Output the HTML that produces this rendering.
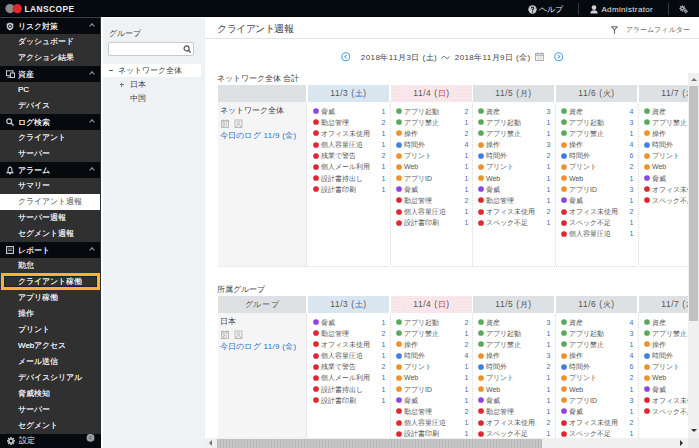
<!DOCTYPE html>
<html lang="ja"><head><meta charset="utf-8">
<style>
*{margin:0;padding:0;box-sizing:border-box}
html,body{width:699px;height:448px;overflow:hidden;background:#fff;font-family:"Liberation Sans",sans-serif;}
.abs{position:absolute}
#top{position:absolute;left:0;top:0;width:699px;height:17px;background:#050a0f;border-bottom:1px solid #010203}
#side{position:absolute;left:0;top:17px;width:101px;height:431px;background:#303031}
#side .line{position:absolute;left:0;top:0;width:100px;height:1px;background:#3d4147}
.sh,.sit,.sa,.so{position:absolute;left:0;width:100px;height:16px;font-size:8px;line-height:16px;white-space:nowrap}
.sh{background:#060a0f;color:#f0f0f0;text-shadow:0 0 0.4px #f0f0f0}
.sit{color:#ececec;text-shadow:0 0 0.4px #ececec}
.sa{background:#fff;color:#555;font-weight:normal}
.so{color:#ececec;text-shadow:0 0 0.4px #ececec}
.so:before{content:"";box-sizing:border-box;position:absolute;left:1px;top:-1px;width:99px;height:17px;border:3px solid #f8b332;box-shadow:inset 0 0 0 1px #1c2128}
.st{position:absolute;left:18px;top:0}
.sh .st{top:0.8px}
.si{position:absolute;left:6px;top:4px;line-height:0}
.chev{position:absolute;left:90px;top:6px;width:4px;height:4px;border-left:1px solid #9aa0a6;border-top:1px solid #9aa0a6;transform:rotate(45deg)}
#foot{position:absolute;left:0;top:434px;width:101px;height:14px;background:#060a0f;color:#e8e8e8;font-size:8px;line-height:14px}
#grp{position:absolute;left:101px;top:17px;width:104px;height:431px;background:#eef2f4;border-left:2px solid #fff;border-top:1px solid #fff}
#main{position:absolute;left:205px;top:17px;width:494px;height:431px;background:#fff}
.hc{position:absolute;height:17px;font-size:8.4px;line-height:17px;text-align:center;color:#555;letter-spacing:0.6px}
.hg{background:#dde1e4}
.hb{background:repeating-conic-gradient(#d3e2ee 0 25%,#dfebf3 0 50%) 0 0/2px 2px}
.hp{background:linear-gradient(#f9e7e9 2px,transparent 2px) 0 0/3px 3px,linear-gradient(90deg,#f9e7e9 2px,#ecdcee 2px) 0 0/3px 3px}
.sat{color:#2f6fc2} .sun{color:#d0303c}
.fc{position:absolute;background:#f5f5f5;padding:3px 0 0 1.5px}
.nm{font-size:7.5px;line-height:11px;color:#444}
.ic2{height:14px}
.bx{display:inline-block;width:7px;height:7px;border:1px solid #c2c2c2;margin:0 0 0 1px;margin-right:5px;vertical-align:top}
.lnk{font-size:8px;line-height:11px;color:#2a70c4;letter-spacing:0.3px}
.vl{position:absolute;width:1px;background:#e6e6e6}
.dl{position:absolute;width:1px;background:repeating-linear-gradient(#dcdcdc 0 1px,transparent 1px 2px)}
.bl{position:absolute;height:1px;background:repeating-linear-gradient(90deg,#d8d8d8 0 1px,transparent 1px 2px)}
.cc{position:absolute}
.r{position:relative;height:11.18px;font-size:7px;line-height:11.18px;color:#555;white-space:nowrap}
.r .d{position:absolute;left:4px;top:1.6px}
.r .t{position:absolute;left:13px;top:0}
.r .n{position:absolute;right:3.5px;top:0;color:#3c6fc0}
</style></head><body>
<div id="top"></div>
<div id="side"><div class="line"></div></div>
<div class="sh" style="top:18px"><span class="si"><svg width="8" height="9" viewBox="0 0 8 9"><path d="M4 0.5 L7.3 1.8 L7.3 4.6 Q7.3 7.2 4 8.6 Q0.7 7.2 0.7 4.6 L0.7 1.8 Z" fill="#c9cdd2"/><circle cx="4" cy="4.3" r="1.6" fill="none" stroke="#1a1d22" stroke-width="1"/></svg></span><span class="st">リスク対策</span><span class="chev"></span></div>
<div class="sit" style="top:34px"><span class="st">ダッシュボード</span></div>
<div class="sit" style="top:50px"><span class="st">アクション結果</span></div>
<div class="sh" style="top:66px"><span class="si"><svg width="9" height="8" viewBox="0 0 9 8"><rect x="0.5" y="0.8" width="6.5" height="4.8" fill="none" stroke="#c9cdd2" stroke-width="1"/><rect x="4.5" y="3" width="4" height="4.5" fill="#070b10" stroke="#c9cdd2" stroke-width="1"/><path d="M1.5 7.2 H4" stroke="#c9cdd2" stroke-width="1"/></svg></span><span class="st">資産</span><span class="chev"></span></div>
<div class="sit" style="top:82px"><span class="st">PC</span></div>
<div class="sit" style="top:98px"><span class="st">デバイス</span></div>
<div class="sh" style="top:114px"><span class="si"><svg width="8" height="8" viewBox="0 0 8 8"><circle cx="3.2" cy="3.2" r="2.4" fill="none" stroke="#c9cdd2" stroke-width="1.2"/><path d="M5 5 L7.5 7.5" stroke="#c9cdd2" stroke-width="1.4"/></svg></span><span class="st">ログ検索</span><span class="chev"></span></div>
<div class="sit" style="top:130px"><span class="st">クライアント</span></div>
<div class="sit" style="top:146px"><span class="st">サーバー</span></div>
<div class="sh" style="top:162px"><span class="si"><svg width="8" height="9" viewBox="0 0 8 9"><path d="M4 1.2 Q5.9 1.2 5.9 3.8 L5.9 5.5 L6.9 6.6 L1.1 6.6 L2.1 5.5 L2.1 3.8 Q2.1 1.2 4 1.2 Z" fill="none" stroke="#c9cdd2" stroke-width="1.1"/><path d="M3 7.6 H5" stroke="#c9cdd2" stroke-width="1.1"/><circle cx="4" cy="0.8" r="0.6" fill="#c9cdd2"/></svg></span><span class="st">アラーム</span><span class="chev"></span></div>
<div class="sit" style="top:178px"><span class="st">サマリー</span></div>
<div class="sa" style="top:194px"><span class="st">クライアント週報</span></div>
<div class="sit" style="top:210px"><span class="st">サーバー週報</span></div>
<div class="sit" style="top:226px"><span class="st">セグメント週報</span></div>
<div class="sh" style="top:242px"><span class="si"><svg width="8" height="8" viewBox="0 0 8 8"><rect x="0.6" y="0.6" width="6.8" height="6.8" fill="none" stroke="#c9cdd2" stroke-width="1.1"/><path d="M2 4.2 H6 M2.6 2.4 H3.4 M4.6 2.4 H5.4" stroke="#c9cdd2" stroke-width="1"/></svg></span><span class="st">レポート</span><span class="chev"></span></div>
<div class="sit" style="top:258px"><span class="st">勤怠</span></div>
<div class="so" style="top:274px"><span class="st">クライアント稼働</span></div>
<div class="sit" style="top:290px"><span class="st">アプリ稼働</span></div>
<div class="sit" style="top:306px"><span class="st">操作</span></div>
<div class="sit" style="top:322px"><span class="st">プリント</span></div>
<div class="sit" style="top:338px"><span class="st">Webアクセス</span></div>
<div class="sit" style="top:354px"><span class="st">メール送信</span></div>
<div class="sit" style="top:370px"><span class="st">デバイスシリアル</span></div>
<div class="sit" style="top:386px"><span class="st">脅威検知</span></div>
<div class="sit" style="top:402px"><span class="st">サーバー</span></div>
<div class="sit" style="top:418px"><span class="st">セグメント</span></div>
<div id="foot"><span style="position:absolute;left:18.5px">設定</span></div>
<div id="grp"></div>
<div id="main"></div>
<div class="abs" style="left:217px;top:22px;font-size:10px;line-height:13px;color:#444;transform:scale(0.955);transform-origin:0 50%">クライアント週報</div>
<div class="abs" style="left:205px;top:38px;width:494px;height:1px;background:#e3e3e3"></div>
<div class="abs" style="left:217px;top:73px;font-size:7.5px;line-height:11px;color:#444">ネットワーク全体 合計</div>
<div class="hc hg" style="left:218px;top:85px;width:88px"></div>
<div class="hc hb" style="left:308px;top:85px;width:81px">11/3 (<span class="sat">土</span>)</div>
<div class="hc hp" style="left:391px;top:85px;width:81px">11/4 (<span class="sun">日</span>)</div>
<div class="hc hg" style="left:473px;top:85px;width:81px">11/5 (月)</div>
<div class="hc hg" style="left:556px;top:85px;width:81px">11/6 (火)</div>
<div class="hc hg" style="left:639px;top:85px;width:81px">11/7 (水)</div>
<div class="fc" style="left:218px;top:102px;width:88px;height:164px"><div class="nm">ネットワーク全体</div><div class="ic2"><svg width="26" height="9" viewBox="0 0 26 9" style="position:absolute;left:3px;top:17px"><g fill="none" stroke="#b4b4b4" stroke-width="0.9"><rect x="0.5" y="1.5" width="7" height="7"/><path d="M2 0.3 V2.5 M6 0.3 V2.5 M0.5 3 H7.5"/><path d="M2 4.6 H3.6 V6 H2.2 V7.6 H3.6 M5.3 4.5 V7.6"/><rect x="14" y="1" width="7" height="7.5"/><circle cx="17.5" cy="3.6" r="1.3"/><path d="M15.2 8.3 Q15.5 5.6 17.5 5.6 Q19.5 5.6 19.8 8.3"/></g></svg></div><div class="lnk">今日のログ 11/9 (金)</div></div>
<div class="vl" style="left:306px;top:102px;height:164px"></div>
<div class="bl" style="left:218px;top:266px;width:480px"></div>
<div class="cc" style="left:308px;top:105.5px;width:81px"><div class="r"><svg class="d" width="8" height="8" viewBox="0 0 8 8"><circle cx="4" cy="4" r="2.85" fill="#8e44e0"/></svg><span class="t">脅威</span><span class="n">1</span></div><div class="r"><svg class="d" width="8" height="8" viewBox="0 0 8 8"><circle cx="4" cy="4" r="2.85" fill="#e0262f"/></svg><span class="t">勤怠管理</span><span class="n">2</span></div><div class="r"><svg class="d" width="8" height="8" viewBox="0 0 8 8"><circle cx="4" cy="4" r="2.85" fill="#e0262f"/></svg><span class="t">オフィス未使用</span><span class="n">1</span></div><div class="r"><svg class="d" width="8" height="8" viewBox="0 0 8 8"><circle cx="4" cy="4" r="2.85" fill="#e0262f"/></svg><span class="t">個人容量圧迫</span><span class="n">1</span></div><div class="r"><svg class="d" width="8" height="8" viewBox="0 0 8 8"><circle cx="4" cy="4" r="2.85" fill="#e0262f"/></svg><span class="t">残業で警告</span><span class="n">2</span></div><div class="r"><svg class="d" width="8" height="8" viewBox="0 0 8 8"><circle cx="4" cy="4" r="2.85" fill="#e0262f"/></svg><span class="t">個人メール利用</span><span class="n">1</span></div><div class="r"><svg class="d" width="8" height="8" viewBox="0 0 8 8"><circle cx="4" cy="4" r="2.85" fill="#e0262f"/></svg><span class="t">設計書持出し</span><span class="n">1</span></div><div class="r"><svg class="d" width="8" height="8" viewBox="0 0 8 8"><circle cx="4" cy="4" r="2.85" fill="#e0262f"/></svg><span class="t">設計書印刷</span><span class="n">1</span></div></div>
<div class="dl" style="left:390px;top:102px;height:164px"></div>
<div class="cc" style="left:391px;top:105.5px;width:81px"><div class="r"><svg class="d" width="8" height="8" viewBox="0 0 8 8"><circle cx="4" cy="4" r="2.85" fill="#5aaa5e"/></svg><span class="t">アプリ起動</span><span class="n">2</span></div><div class="r"><svg class="d" width="8" height="8" viewBox="0 0 8 8"><circle cx="4" cy="4" r="2.85" fill="#5aaa5e"/></svg><span class="t">アプリ禁止</span><span class="n">1</span></div><div class="r"><svg class="d" width="8" height="8" viewBox="0 0 8 8"><circle cx="4" cy="4" r="2.85" fill="#f0902a"/></svg><span class="t">操作</span><span class="n">2</span></div><div class="r"><svg class="d" width="8" height="8" viewBox="0 0 8 8"><circle cx="4" cy="4" r="2.85" fill="#3d7fe0"/></svg><span class="t">時間外</span><span class="n">4</span></div><div class="r"><svg class="d" width="8" height="8" viewBox="0 0 8 8"><circle cx="4" cy="4" r="2.85" fill="#f0902a"/></svg><span class="t">プリント</span><span class="n">1</span></div><div class="r"><svg class="d" width="8" height="8" viewBox="0 0 8 8"><circle cx="4" cy="4" r="2.85" fill="#f0902a"/></svg><span class="t">Web</span><span class="n">1</span></div><div class="r"><svg class="d" width="8" height="8" viewBox="0 0 8 8"><circle cx="4" cy="4" r="2.85" fill="#f0902a"/></svg><span class="t">アプリID</span><span class="n">1</span></div><div class="r"><svg class="d" width="8" height="8" viewBox="0 0 8 8"><circle cx="4" cy="4" r="2.85" fill="#8e44e0"/></svg><span class="t">脅威</span><span class="n">1</span></div><div class="r"><svg class="d" width="8" height="8" viewBox="0 0 8 8"><circle cx="4" cy="4" r="2.85" fill="#e0262f"/></svg><span class="t">勤怠管理</span><span class="n">2</span></div><div class="r"><svg class="d" width="8" height="8" viewBox="0 0 8 8"><circle cx="4" cy="4" r="2.85" fill="#e0262f"/></svg><span class="t">個人容量圧迫</span><span class="n">1</span></div><div class="r"><svg class="d" width="8" height="8" viewBox="0 0 8 8"><circle cx="4" cy="4" r="2.85" fill="#e0262f"/></svg><span class="t">設計書印刷</span><span class="n">1</span></div></div>
<div class="dl" style="left:472px;top:102px;height:164px"></div>
<div class="cc" style="left:473px;top:105.5px;width:81px"><div class="r"><svg class="d" width="8" height="8" viewBox="0 0 8 8"><circle cx="4" cy="4" r="2.85" fill="#5aaa5e"/></svg><span class="t">資産</span><span class="n">3</span></div><div class="r"><svg class="d" width="8" height="8" viewBox="0 0 8 8"><circle cx="4" cy="4" r="2.85" fill="#5aaa5e"/></svg><span class="t">アプリ起動</span><span class="n">1</span></div><div class="r"><svg class="d" width="8" height="8" viewBox="0 0 8 8"><circle cx="4" cy="4" r="2.85" fill="#5aaa5e"/></svg><span class="t">アプリ禁止</span><span class="n">1</span></div><div class="r"><svg class="d" width="8" height="8" viewBox="0 0 8 8"><circle cx="4" cy="4" r="2.85" fill="#f0902a"/></svg><span class="t">操作</span><span class="n">3</span></div><div class="r"><svg class="d" width="8" height="8" viewBox="0 0 8 8"><circle cx="4" cy="4" r="2.85" fill="#3d7fe0"/></svg><span class="t">時間外</span><span class="n">2</span></div><div class="r"><svg class="d" width="8" height="8" viewBox="0 0 8 8"><circle cx="4" cy="4" r="2.85" fill="#f0902a"/></svg><span class="t">プリント</span><span class="n">1</span></div><div class="r"><svg class="d" width="8" height="8" viewBox="0 0 8 8"><circle cx="4" cy="4" r="2.85" fill="#f0902a"/></svg><span class="t">Web</span><span class="n">1</span></div><div class="r"><svg class="d" width="8" height="8" viewBox="0 0 8 8"><circle cx="4" cy="4" r="2.85" fill="#8e44e0"/></svg><span class="t">脅威</span><span class="n">1</span></div><div class="r"><svg class="d" width="8" height="8" viewBox="0 0 8 8"><circle cx="4" cy="4" r="2.85" fill="#e0262f"/></svg><span class="t">勤怠管理</span><span class="n">1</span></div><div class="r"><svg class="d" width="8" height="8" viewBox="0 0 8 8"><circle cx="4" cy="4" r="2.85" fill="#e0262f"/></svg><span class="t">オフィス未使用</span><span class="n">2</span></div><div class="r"><svg class="d" width="8" height="8" viewBox="0 0 8 8"><circle cx="4" cy="4" r="2.85" fill="#e0262f"/></svg><span class="t">スペック不足</span><span class="n">1</span></div></div>
<div class="dl" style="left:555px;top:102px;height:164px"></div>
<div class="cc" style="left:556px;top:105.5px;width:81px"><div class="r"><svg class="d" width="8" height="8" viewBox="0 0 8 8"><circle cx="4" cy="4" r="2.85" fill="#5aaa5e"/></svg><span class="t">資産</span><span class="n">4</span></div><div class="r"><svg class="d" width="8" height="8" viewBox="0 0 8 8"><circle cx="4" cy="4" r="2.85" fill="#5aaa5e"/></svg><span class="t">アプリ起動</span><span class="n">3</span></div><div class="r"><svg class="d" width="8" height="8" viewBox="0 0 8 8"><circle cx="4" cy="4" r="2.85" fill="#5aaa5e"/></svg><span class="t">アプリ禁止</span><span class="n">1</span></div><div class="r"><svg class="d" width="8" height="8" viewBox="0 0 8 8"><circle cx="4" cy="4" r="2.85" fill="#f0902a"/></svg><span class="t">操作</span><span class="n">4</span></div><div class="r"><svg class="d" width="8" height="8" viewBox="0 0 8 8"><circle cx="4" cy="4" r="2.85" fill="#3d7fe0"/></svg><span class="t">時間外</span><span class="n">6</span></div><div class="r"><svg class="d" width="8" height="8" viewBox="0 0 8 8"><circle cx="4" cy="4" r="2.85" fill="#f0902a"/></svg><span class="t">プリント</span><span class="n">2</span></div><div class="r"><svg class="d" width="8" height="8" viewBox="0 0 8 8"><circle cx="4" cy="4" r="2.85" fill="#f0902a"/></svg><span class="t">Web</span><span class="n">1</span></div><div class="r"><svg class="d" width="8" height="8" viewBox="0 0 8 8"><circle cx="4" cy="4" r="2.85" fill="#f0902a"/></svg><span class="t">アプリID</span><span class="n">3</span></div><div class="r"><svg class="d" width="8" height="8" viewBox="0 0 8 8"><circle cx="4" cy="4" r="2.85" fill="#8e44e0"/></svg><span class="t">脅威</span><span class="n">1</span></div><div class="r"><svg class="d" width="8" height="8" viewBox="0 0 8 8"><circle cx="4" cy="4" r="2.85" fill="#e0262f"/></svg><span class="t">オフィス未使用</span><span class="n">2</span></div><div class="r"><svg class="d" width="8" height="8" viewBox="0 0 8 8"><circle cx="4" cy="4" r="2.85" fill="#e0262f"/></svg><span class="t">スペック不足</span><span class="n">1</span></div><div class="r"><svg class="d" width="8" height="8" viewBox="0 0 8 8"><circle cx="4" cy="4" r="2.85" fill="#e0262f"/></svg><span class="t">個人容量圧迫</span><span class="n">1</span></div></div>
<div class="dl" style="left:638px;top:102px;height:164px"></div>
<div class="cc" style="left:639px;top:105.5px;width:81px"><div class="r"><svg class="d" width="8" height="8" viewBox="0 0 8 8"><circle cx="4" cy="4" r="2.85" fill="#5aaa5e"/></svg><span class="t">資産</span><span class="n"></span></div><div class="r"><svg class="d" width="8" height="8" viewBox="0 0 8 8"><circle cx="4" cy="4" r="2.85" fill="#5aaa5e"/></svg><span class="t">アプリ禁止</span><span class="n"></span></div><div class="r"><svg class="d" width="8" height="8" viewBox="0 0 8 8"><circle cx="4" cy="4" r="2.85" fill="#f0902a"/></svg><span class="t">操作</span><span class="n"></span></div><div class="r"><svg class="d" width="8" height="8" viewBox="0 0 8 8"><circle cx="4" cy="4" r="2.85" fill="#3d7fe0"/></svg><span class="t">時間外</span><span class="n"></span></div><div class="r"><svg class="d" width="8" height="8" viewBox="0 0 8 8"><circle cx="4" cy="4" r="2.85" fill="#f0902a"/></svg><span class="t">プリント</span><span class="n"></span></div><div class="r"><svg class="d" width="8" height="8" viewBox="0 0 8 8"><circle cx="4" cy="4" r="2.85" fill="#f0902a"/></svg><span class="t">Web</span><span class="n"></span></div><div class="r"><svg class="d" width="8" height="8" viewBox="0 0 8 8"><circle cx="4" cy="4" r="2.85" fill="#8e44e0"/></svg><span class="t">脅威</span><span class="n"></span></div><div class="r"><svg class="d" width="8" height="8" viewBox="0 0 8 8"><circle cx="4" cy="4" r="2.85" fill="#e0262f"/></svg><span class="t">オフィス未使用</span><span class="n"></span></div><div class="r"><svg class="d" width="8" height="8" viewBox="0 0 8 8"><circle cx="4" cy="4" r="2.85" fill="#e0262f"/></svg><span class="t">スペック不足</span><span class="n"></span></div></div>
<div class="abs" style="left:217px;top:284px;font-size:7.5px;line-height:11px;color:#444">所属グループ</div>
<div class="hc hg" style="left:218px;top:296px;width:88px">グループ</div>
<div class="hc hb" style="left:308px;top:296px;width:81px">11/3 (<span class="sat">土</span>)</div>
<div class="hc hp" style="left:391px;top:296px;width:81px">11/4 (<span class="sun">日</span>)</div>
<div class="hc hg" style="left:473px;top:296px;width:81px">11/5 (月)</div>
<div class="hc hg" style="left:556px;top:296px;width:81px">11/6 (火)</div>
<div class="hc hg" style="left:639px;top:296px;width:81px">11/7 (水)</div>
<div class="fc" style="left:218px;top:313px;width:88px;height:200px"><div class="nm">日本</div><div class="ic2"><svg width="26" height="9" viewBox="0 0 26 9" style="position:absolute;left:3px;top:17px"><g fill="none" stroke="#b4b4b4" stroke-width="0.9"><rect x="0.5" y="1.5" width="7" height="7"/><path d="M2 0.3 V2.5 M6 0.3 V2.5 M0.5 3 H7.5"/><path d="M2 4.6 H3.6 V6 H2.2 V7.6 H3.6 M5.3 4.5 V7.6"/><rect x="14" y="1" width="7" height="7.5"/><circle cx="17.5" cy="3.6" r="1.3"/><path d="M15.2 8.3 Q15.5 5.6 17.5 5.6 Q19.5 5.6 19.8 8.3"/></g></svg></div><div class="lnk">今日のログ 11/9 (金)</div></div>
<div class="vl" style="left:306px;top:313px;height:200px"></div>
<div class="bl" style="left:218px;top:513px;width:480px"></div>
<div class="cc" style="left:308px;top:316.5px;width:81px"><div class="r"><svg class="d" width="8" height="8" viewBox="0 0 8 8"><circle cx="4" cy="4" r="2.85" fill="#8e44e0"/></svg><span class="t">脅威</span><span class="n">1</span></div><div class="r"><svg class="d" width="8" height="8" viewBox="0 0 8 8"><circle cx="4" cy="4" r="2.85" fill="#e0262f"/></svg><span class="t">勤怠管理</span><span class="n">2</span></div><div class="r"><svg class="d" width="8" height="8" viewBox="0 0 8 8"><circle cx="4" cy="4" r="2.85" fill="#e0262f"/></svg><span class="t">オフィス未使用</span><span class="n">1</span></div><div class="r"><svg class="d" width="8" height="8" viewBox="0 0 8 8"><circle cx="4" cy="4" r="2.85" fill="#e0262f"/></svg><span class="t">個人容量圧迫</span><span class="n">1</span></div><div class="r"><svg class="d" width="8" height="8" viewBox="0 0 8 8"><circle cx="4" cy="4" r="2.85" fill="#e0262f"/></svg><span class="t">残業で警告</span><span class="n">2</span></div><div class="r"><svg class="d" width="8" height="8" viewBox="0 0 8 8"><circle cx="4" cy="4" r="2.85" fill="#e0262f"/></svg><span class="t">個人メール利用</span><span class="n">1</span></div><div class="r"><svg class="d" width="8" height="8" viewBox="0 0 8 8"><circle cx="4" cy="4" r="2.85" fill="#e0262f"/></svg><span class="t">設計書持出し</span><span class="n">1</span></div><div class="r"><svg class="d" width="8" height="8" viewBox="0 0 8 8"><circle cx="4" cy="4" r="2.85" fill="#e0262f"/></svg><span class="t">設計書印刷</span><span class="n">1</span></div></div>
<div class="dl" style="left:390px;top:313px;height:200px"></div>
<div class="cc" style="left:391px;top:316.5px;width:81px"><div class="r"><svg class="d" width="8" height="8" viewBox="0 0 8 8"><circle cx="4" cy="4" r="2.85" fill="#5aaa5e"/></svg><span class="t">アプリ起動</span><span class="n">2</span></div><div class="r"><svg class="d" width="8" height="8" viewBox="0 0 8 8"><circle cx="4" cy="4" r="2.85" fill="#5aaa5e"/></svg><span class="t">アプリ禁止</span><span class="n">1</span></div><div class="r"><svg class="d" width="8" height="8" viewBox="0 0 8 8"><circle cx="4" cy="4" r="2.85" fill="#f0902a"/></svg><span class="t">操作</span><span class="n">2</span></div><div class="r"><svg class="d" width="8" height="8" viewBox="0 0 8 8"><circle cx="4" cy="4" r="2.85" fill="#3d7fe0"/></svg><span class="t">時間外</span><span class="n">4</span></div><div class="r"><svg class="d" width="8" height="8" viewBox="0 0 8 8"><circle cx="4" cy="4" r="2.85" fill="#f0902a"/></svg><span class="t">プリント</span><span class="n">1</span></div><div class="r"><svg class="d" width="8" height="8" viewBox="0 0 8 8"><circle cx="4" cy="4" r="2.85" fill="#f0902a"/></svg><span class="t">Web</span><span class="n">1</span></div><div class="r"><svg class="d" width="8" height="8" viewBox="0 0 8 8"><circle cx="4" cy="4" r="2.85" fill="#f0902a"/></svg><span class="t">アプリID</span><span class="n">1</span></div><div class="r"><svg class="d" width="8" height="8" viewBox="0 0 8 8"><circle cx="4" cy="4" r="2.85" fill="#8e44e0"/></svg><span class="t">脅威</span><span class="n">1</span></div><div class="r"><svg class="d" width="8" height="8" viewBox="0 0 8 8"><circle cx="4" cy="4" r="2.85" fill="#e0262f"/></svg><span class="t">勤怠管理</span><span class="n">2</span></div><div class="r"><svg class="d" width="8" height="8" viewBox="0 0 8 8"><circle cx="4" cy="4" r="2.85" fill="#e0262f"/></svg><span class="t">個人容量圧迫</span><span class="n">1</span></div><div class="r"><svg class="d" width="8" height="8" viewBox="0 0 8 8"><circle cx="4" cy="4" r="2.85" fill="#e0262f"/></svg><span class="t">設計書印刷</span><span class="n">1</span></div></div>
<div class="dl" style="left:472px;top:313px;height:200px"></div>
<div class="cc" style="left:473px;top:316.5px;width:81px"><div class="r"><svg class="d" width="8" height="8" viewBox="0 0 8 8"><circle cx="4" cy="4" r="2.85" fill="#5aaa5e"/></svg><span class="t">資産</span><span class="n">3</span></div><div class="r"><svg class="d" width="8" height="8" viewBox="0 0 8 8"><circle cx="4" cy="4" r="2.85" fill="#5aaa5e"/></svg><span class="t">アプリ起動</span><span class="n">1</span></div><div class="r"><svg class="d" width="8" height="8" viewBox="0 0 8 8"><circle cx="4" cy="4" r="2.85" fill="#5aaa5e"/></svg><span class="t">アプリ禁止</span><span class="n">1</span></div><div class="r"><svg class="d" width="8" height="8" viewBox="0 0 8 8"><circle cx="4" cy="4" r="2.85" fill="#f0902a"/></svg><span class="t">操作</span><span class="n">3</span></div><div class="r"><svg class="d" width="8" height="8" viewBox="0 0 8 8"><circle cx="4" cy="4" r="2.85" fill="#3d7fe0"/></svg><span class="t">時間外</span><span class="n">2</span></div><div class="r"><svg class="d" width="8" height="8" viewBox="0 0 8 8"><circle cx="4" cy="4" r="2.85" fill="#f0902a"/></svg><span class="t">プリント</span><span class="n">1</span></div><div class="r"><svg class="d" width="8" height="8" viewBox="0 0 8 8"><circle cx="4" cy="4" r="2.85" fill="#f0902a"/></svg><span class="t">Web</span><span class="n">1</span></div><div class="r"><svg class="d" width="8" height="8" viewBox="0 0 8 8"><circle cx="4" cy="4" r="2.85" fill="#8e44e0"/></svg><span class="t">脅威</span><span class="n">1</span></div><div class="r"><svg class="d" width="8" height="8" viewBox="0 0 8 8"><circle cx="4" cy="4" r="2.85" fill="#e0262f"/></svg><span class="t">勤怠管理</span><span class="n">1</span></div><div class="r"><svg class="d" width="8" height="8" viewBox="0 0 8 8"><circle cx="4" cy="4" r="2.85" fill="#e0262f"/></svg><span class="t">オフィス未使用</span><span class="n">2</span></div><div class="r"><svg class="d" width="8" height="8" viewBox="0 0 8 8"><circle cx="4" cy="4" r="2.85" fill="#e0262f"/></svg><span class="t">スペック不足</span><span class="n">1</span></div></div>
<div class="dl" style="left:555px;top:313px;height:200px"></div>
<div class="cc" style="left:556px;top:316.5px;width:81px"><div class="r"><svg class="d" width="8" height="8" viewBox="0 0 8 8"><circle cx="4" cy="4" r="2.85" fill="#5aaa5e"/></svg><span class="t">資産</span><span class="n">4</span></div><div class="r"><svg class="d" width="8" height="8" viewBox="0 0 8 8"><circle cx="4" cy="4" r="2.85" fill="#5aaa5e"/></svg><span class="t">アプリ起動</span><span class="n">3</span></div><div class="r"><svg class="d" width="8" height="8" viewBox="0 0 8 8"><circle cx="4" cy="4" r="2.85" fill="#5aaa5e"/></svg><span class="t">アプリ禁止</span><span class="n">1</span></div><div class="r"><svg class="d" width="8" height="8" viewBox="0 0 8 8"><circle cx="4" cy="4" r="2.85" fill="#f0902a"/></svg><span class="t">操作</span><span class="n">4</span></div><div class="r"><svg class="d" width="8" height="8" viewBox="0 0 8 8"><circle cx="4" cy="4" r="2.85" fill="#3d7fe0"/></svg><span class="t">時間外</span><span class="n">6</span></div><div class="r"><svg class="d" width="8" height="8" viewBox="0 0 8 8"><circle cx="4" cy="4" r="2.85" fill="#f0902a"/></svg><span class="t">プリント</span><span class="n">2</span></div><div class="r"><svg class="d" width="8" height="8" viewBox="0 0 8 8"><circle cx="4" cy="4" r="2.85" fill="#f0902a"/></svg><span class="t">Web</span><span class="n">1</span></div><div class="r"><svg class="d" width="8" height="8" viewBox="0 0 8 8"><circle cx="4" cy="4" r="2.85" fill="#f0902a"/></svg><span class="t">アプリID</span><span class="n">3</span></div><div class="r"><svg class="d" width="8" height="8" viewBox="0 0 8 8"><circle cx="4" cy="4" r="2.85" fill="#8e44e0"/></svg><span class="t">脅威</span><span class="n">1</span></div><div class="r"><svg class="d" width="8" height="8" viewBox="0 0 8 8"><circle cx="4" cy="4" r="2.85" fill="#e0262f"/></svg><span class="t">オフィス未使用</span><span class="n">2</span></div><div class="r"><svg class="d" width="8" height="8" viewBox="0 0 8 8"><circle cx="4" cy="4" r="2.85" fill="#e0262f"/></svg><span class="t">スペック不足</span><span class="n">1</span></div><div class="r"><svg class="d" width="8" height="8" viewBox="0 0 8 8"><circle cx="4" cy="4" r="2.85" fill="#e0262f"/></svg><span class="t">個人容量圧迫</span><span class="n">1</span></div></div>
<div class="dl" style="left:638px;top:313px;height:200px"></div>
<div class="cc" style="left:639px;top:316.5px;width:81px"><div class="r"><svg class="d" width="8" height="8" viewBox="0 0 8 8"><circle cx="4" cy="4" r="2.85" fill="#5aaa5e"/></svg><span class="t">資産</span><span class="n"></span></div><div class="r"><svg class="d" width="8" height="8" viewBox="0 0 8 8"><circle cx="4" cy="4" r="2.85" fill="#5aaa5e"/></svg><span class="t">アプリ禁止</span><span class="n"></span></div><div class="r"><svg class="d" width="8" height="8" viewBox="0 0 8 8"><circle cx="4" cy="4" r="2.85" fill="#f0902a"/></svg><span class="t">操作</span><span class="n"></span></div><div class="r"><svg class="d" width="8" height="8" viewBox="0 0 8 8"><circle cx="4" cy="4" r="2.85" fill="#3d7fe0"/></svg><span class="t">時間外</span><span class="n"></span></div><div class="r"><svg class="d" width="8" height="8" viewBox="0 0 8 8"><circle cx="4" cy="4" r="2.85" fill="#f0902a"/></svg><span class="t">プリント</span><span class="n"></span></div><div class="r"><svg class="d" width="8" height="8" viewBox="0 0 8 8"><circle cx="4" cy="4" r="2.85" fill="#f0902a"/></svg><span class="t">Web</span><span class="n"></span></div><div class="r"><svg class="d" width="8" height="8" viewBox="0 0 8 8"><circle cx="4" cy="4" r="2.85" fill="#8e44e0"/></svg><span class="t">脅威</span><span class="n"></span></div><div class="r"><svg class="d" width="8" height="8" viewBox="0 0 8 8"><circle cx="4" cy="4" r="2.85" fill="#e0262f"/></svg><span class="t">オフィス未使用</span><span class="n"></span></div><div class="r"><svg class="d" width="8" height="8" viewBox="0 0 8 8"><circle cx="4" cy="4" r="2.85" fill="#e0262f"/></svg><span class="t">スペック不足</span><span class="n"></span></div></div>
<!-- top bar content -->
<svg class="abs" style="left:4px;top:3px" width="20" height="12" viewBox="0 0 20 12"><circle cx="6" cy="5.6" r="4.6" fill="#8a8a8a"/><circle cx="13.4" cy="5.7" r="4.6" fill="#e3262b"/><path d="M9.3 3.2 A4.6 4.6 0 0 1 9.3 8.2 A4.6 4.6 0 0 1 9.3 3.2Z" fill="#8a4a30"/></svg>
<div class="abs" style="left:24.5px;top:4px;font-size:8.4px;line-height:11px;font-weight:bold;color:#f0f0f0;letter-spacing:0.45px">LANSCOPE</div>
<svg class="abs" style="left:528px;top:5px" width="9" height="9" viewBox="0 0 9 9"><circle cx="4.5" cy="4.5" r="4.2" fill="#c8c8c8"/><path d="M3.2 3.4 Q3.2 2 4.5 2 Q5.8 2 5.8 3.3 Q5.8 4.1 4.6 4.6 L4.6 5.6" fill="none" stroke="#111" stroke-width="1.1"/><circle cx="4.6" cy="6.9" r="0.65" fill="#111"/></svg>
<div class="abs" style="left:539px;top:4px;font-size:7.7px;line-height:12px;color:#e6e6e6">ヘルプ</div>
<div class="abs" style="left:578px;top:3px;width:1px;height:12px;background:#34383d"></div>
<svg class="abs" style="left:590px;top:5px" width="8" height="9" viewBox="0 0 8 9"><circle cx="4" cy="2.6" r="2.3" fill="#d0d0d0"/><path d="M0.3 8.6 Q0.6 5.3 4 5.3 Q7.4 5.3 7.7 8.6 Z" fill="#d0d0d0"/></svg>
<div class="abs" style="left:601.4px;top:4px;font-size:8px;line-height:12px;color:#e6e6e6;letter-spacing:0.35px">Administrator</div>
<div class="abs" style="left:668px;top:3px;width:1px;height:12px;background:#34383d"></div>
<svg class="abs" style="left:679px;top:5px" width="9.5" height="8.6" viewBox="0 0 11 10"><g fill="#a8a8a8"><circle cx="4" cy="4" r="2.5"/><rect x="3.3" y="0.4" width="1.4" height="7.2"/><rect x="0.4" y="3.3" width="7.2" height="1.4"/><rect x="3.3" y="0.4" width="1.4" height="7.2" transform="rotate(45 4 4)"/><rect x="3.3" y="0.4" width="1.4" height="7.2" transform="rotate(-45 4 4)"/><circle cx="8" cy="7.2" r="1.8"/><rect x="7.5" y="4.8" width="1" height="4.8"/><rect x="5.6" y="6.7" width="4.8" height="1"/></g><circle cx="4" cy="4" r="0.9" fill="#060a0f"/><circle cx="8" cy="7.2" r="0.6" fill="#060a0f"/></svg>
<!-- footer icons -->
<svg class="abs" style="left:7px;top:437px" width="8" height="8" viewBox="0 0 8 8"><g fill="#c4c4c4"><circle cx="4" cy="4" r="2.6"/><rect x="3.2" y="0" width="1.6" height="8"/><rect x="0" y="3.2" width="8" height="1.6"/><rect x="3.2" y="0" width="1.6" height="8" transform="rotate(45 4 4)"/><rect x="3.2" y="0" width="1.6" height="8" transform="rotate(-45 4 4)"/></g><circle cx="4" cy="4" r="1.3" fill="#060a0f"/></svg>
<svg class="abs" style="left:85.5px;top:434px" width="9" height="8" viewBox="0 0 9 8"><circle cx="4.5" cy="3.8" r="4" fill="#9c9c9c"/><path d="M5.2 2.2 L3.6 3.8 L5.2 5.4" fill="none" stroke="#444" stroke-width="0.9"/></svg>
<!-- group panel -->
<div class="abs" style="left:108.5px;top:28px;font-size:8px;line-height:12px;color:#4a4a4a">グループ</div>
<div class="abs" style="left:108px;top:42px;width:86px;height:14px;background:#fff;border:1px solid #c9cbcd;border-radius:2px"></div>
<svg class="abs" style="left:183px;top:44.5px" width="9" height="8" viewBox="0 0 9 8"><circle cx="3.6" cy="3.4" r="2.5" fill="none" stroke="#555" stroke-width="1.2"/><path d="M5.4 5.2 L7.6 7.4" stroke="#555" stroke-width="1.4"/></svg>
<div class="abs" style="left:103px;top:64px;width:98px;height:13px;background:#fff"></div>
<div class="abs" style="left:108.5px;top:69.5px;width:4px;height:1px;background:#666"></div>
<div class="abs" style="left:118px;top:64px;font-size:8px;line-height:13px;color:#444">ネットワーク全体</div>
<div class="abs" style="left:119.5px;top:84px;width:4px;height:1px;background:#777"></div>
<div class="abs" style="left:121px;top:82.5px;width:1px;height:4px;background:#777"></div>
<div class="abs" style="left:130px;top:79px;font-size:8px;line-height:12px;color:#444">日本</div>
<div class="abs" style="left:130px;top:93px;font-size:8px;line-height:12px;color:#444">中国</div>
<!-- filter -->
<svg class="abs" style="left:611px;top:25.5px" width="7" height="8" viewBox="0 0 7 8"><path d="M0.2 0.7 H6.8 M0.8 0.9 L3.5 4 L6.2 0.9 M3.5 4 V7.8" fill="none" stroke="#666" stroke-width="1.1"/></svg>
<div class="abs" style="left:625.5px;top:23.7px;font-size:7.2px;line-height:12px;color:#666;letter-spacing:0.2px">アラームフィルター</div>
<!-- date nav -->
<svg class="abs" style="left:340.5px;top:52px" width="9.5" height="9.5" viewBox="0 0 10 10"><circle cx="5" cy="5" r="4.2" fill="none" stroke="#4a9fe3" stroke-width="1.1"/><path d="M5.8 3.2 L4 5 L5.8 6.8" fill="none" stroke="#4a9fe3" stroke-width="1.1"/></svg>
<div class="abs" style="left:360.8px;top:51.5px;font-size:8px;line-height:12px;color:#444;white-space:nowrap;letter-spacing:0.45px">2018年11月3日 (土)</div><svg class="abs" style="left:440.5px;top:54.5px" width="9" height="5" viewBox="0 0 9 5"><path d="M0.6 3.6 C1.6 1.2 3 0.8 4.4 2.3 C5.8 3.8 7.2 3.6 8.3 1.4" fill="none" stroke="#555" stroke-width="0.95"/></svg><div class="abs" style="left:454.8px;top:51.5px;font-size:8px;line-height:12px;color:#444;white-space:nowrap;letter-spacing:0.4px">2018年11月9日 (金)</div>
<svg class="abs" style="left:535px;top:52px" width="9" height="9" viewBox="0 0 9 9"><rect x="0.5" y="1.5" width="8" height="7" fill="none" stroke="#aaa" stroke-width="0.9"/><path d="M0.5 3.2 H8.5" stroke="#aaa" stroke-width="1.2"/><path d="M2.5 0.3 V2.3 M6.5 0.3 V2.3" stroke="#aaa" stroke-width="1"/><path d="M1.5 5 H7.5 M1.5 6.8 H7.5 M3.2 4 V8 M5.8 4 V8" stroke="#ccc" stroke-width="0.6"/></svg>
<svg class="abs" style="left:554px;top:52px" width="9.5" height="9.5" viewBox="0 0 10 10"><circle cx="5" cy="5" r="4.2" fill="none" stroke="#4a9fe3" stroke-width="1.1"/><path d="M4.2 3.2 L6 5 L4.2 6.8" fill="none" stroke="#4a9fe3" stroke-width="1.1"/></svg>
<!-- scrollbars -->
<div class="abs" style="left:688px;top:73px;width:11px;height:365px;background:#f0f0f0"></div>
<div class="abs" style="left:689px;top:86px;width:9px;height:235px;background:#c1c1c1"></div>
<div class="abs" style="left:690.5px;top:78px;width:0;height:0;border-left:3px solid transparent;border-right:3px solid transparent;border-bottom:3px solid #777"></div>
<div class="abs" style="left:690.5px;top:429px;width:0;height:0;border-left:3px solid transparent;border-right:3px solid transparent;border-top:3px solid #333"></div>
<div class="abs" style="left:205px;top:438px;width:483px;height:10px;background:#f0f0f0"></div>
<div class="abs" style="left:217px;top:439px;width:325px;height:9px;background:repeating-linear-gradient(90deg,#b7b7b7 0 1px,#c6c6c6 1px 3px)"></div>
<div class="abs" style="left:209px;top:440px;width:0;height:0;border-top:3px solid transparent;border-bottom:3px solid transparent;border-right:3px solid #777"></div>
<div class="abs" style="left:680px;top:440px;width:0;height:0;border-top:3px solid transparent;border-bottom:3px solid transparent;border-left:3px solid #333"></div>
<div class="abs" style="left:688px;top:438px;width:11px;height:10px;background:#e8e8e8"></div>
</body></html>
